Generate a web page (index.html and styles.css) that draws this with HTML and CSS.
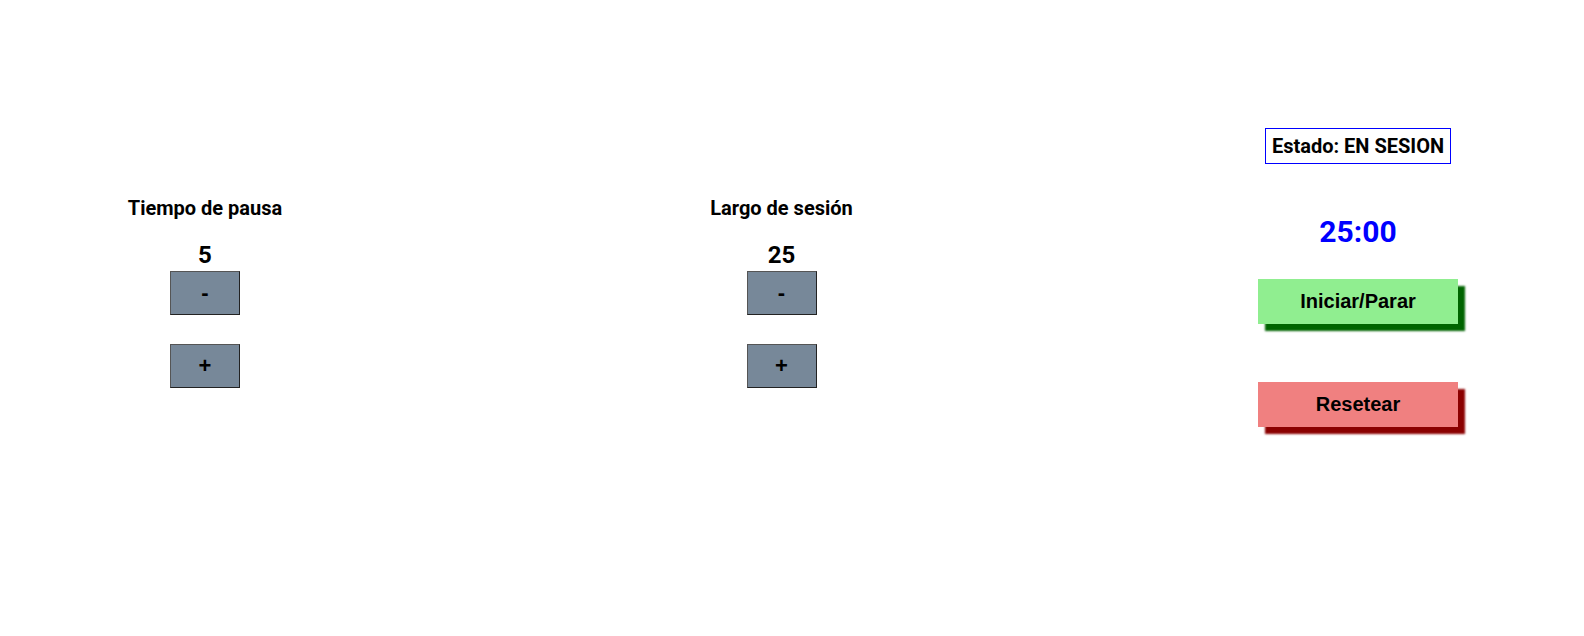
FILE: index.html
```html
<!DOCTYPE html>
<html lang="es">
<head>
<meta charset="utf-8">
<title>Pomodoro</title>
<link rel="stylesheet" href="styles.css">
</head>
<body>
<main class="app">
  <section class="col col-setting">
    <h2 class="label">Tiempo de pausa</h2>
    <div class="value">5</div>
    <button class="step">-</button>
    <button class="step">+</button>
  </section>
  <section class="col col-setting">
    <h2 class="label">Largo de sesión</h2>
    <div class="value">25</div>
    <button class="step">-</button>
    <button class="step">+</button>
  </section>
  <section class="col col-timer">
    <div class="status">Estado: EN SESION</div>
    <div class="clock">25:00</div>
    <button class="action start">Iniciar/Parar</button>
    <button class="action reset">Resetear</button>
  </section>
</main>
</body>
</html>
```
FILE: styles.css
```css
* { box-sizing: border-box; }
html, body { margin: 0; padding: 0; background: #fff; }
body {
  min-height: 100vh;
  font-family: Roboto, "Noto Sans", sans-serif;
  color: #000;
}

.app {
  display: grid;
  grid-template-columns: repeat(3, 400px);
  column-gap: 176.5px;
  padding-left: 5px;
  padding-bottom: 40px;
  align-items: start;
}

.col {
  display: flex;
  flex-direction: column;
  align-items: center;
}

.col-setting { padding-top: 197px; }
.col-timer { padding-top: 128px; }

.label {
  margin: 0;
  font-size: 20px;
  font-weight: 700;
  line-height: 23px;
}

.value {
  margin-top: 20.8px;
  font-size: 24px;
  font-weight: 700;
  line-height: 28px;
}

.step {
  width: 70px;
  height: 44px;
  margin: 2.2px 0 0;
  padding: 0;
  background: #778899;
  border: 1px solid;
  border-color: #555 #222 #222 #555;
  font-family: "Liberation Sans", Arial, sans-serif;
  font-size: 22px;
  font-weight: 700;
  color: #000;
}
.step + .step { margin-top: 29px; }

.status {
  border: 1px solid #0000ff;
  padding: 5.5px 6px;
  font-size: 20px;
  font-weight: 700;
  line-height: 23px;
}

.clock {
  margin-top: 50px;
  font-size: 30px;
  font-weight: 700;
  line-height: 35px;
  color: #0000ff;
}

.action {
  width: 200px;
  height: 45px;
  margin-top: 30px;
  padding: 0;
  border: none;
  font-family: "Liberation Sans", Arial, sans-serif;
  font-size: 20px;
  font-weight: 700;
  color: #000;
}
.start {
  background: #90ee90;
  box-shadow: 7px 7px 2px #006400;
}
.reset {
  margin-top: 58px;
  background: #f08080;
  box-shadow: 7px 7px 2px #8b0000;
}
```
